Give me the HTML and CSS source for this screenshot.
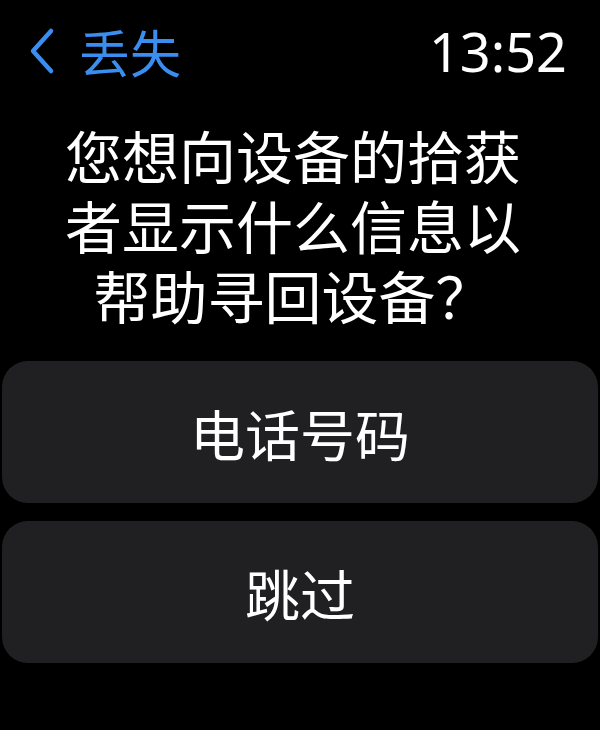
FILE: index.html
```html
<html>
<head>
    <title>丢失</title>
    <meta http-equiv="Content-Type" content="text/html; charset=UTF-8"/>
    <meta name="viewport" content="width=device-width, initial-scale=1.0">
    <link rel="stylesheet" href="styles.css">
</head>
<body>
<div class="header">
    <div class="back">
        <svg class="chevron" width="26" height="48" viewBox="0 0 26 48">
            <polyline points="22,4 4,24 22,44" fill="none" stroke="#3a8ef0" stroke-width="4.5"
                      stroke-linecap="round" stroke-linejoin="round"/>
        </svg>
        <span class="back-title">丢失</span>
    </div>
    <div class="time">13:52</div>
</div>
<div class="question">您想向设备的拾获<br>者显示什么信息以<br>帮助寻回设备？</div>
<div class="actions">
    <div class="btn">电话号码</div>
    <div class="btn">跳过</div>
</div>
</body>
</html>
```

FILE: styles.css
```css
html, body {
    margin: 0px;
    background: #000;
    color: #fff;
    font-family: "Noto Sans CJK SC", "Noto Sans", sans-serif;
}

* {
    box-sizing: border-box;
}

body {
    width: 600px;
    height: 730px;
    overflow: hidden;
}

.header {
    display: flex;
    justify-content: space-between;
    align-items: center;
    height: 110px;
    padding: 0 33px 8px 29px;
}

.back {
    display: flex;
    align-items: center;
    color: #3a8ef0;
}

.chevron {
    margin-right: 24px;
}

.back-title {
    font-size: 51px;
    line-height: 1;
}

.time {
    font-family: "Noto Sans", sans-serif;
    font-size: 54px;
    line-height: 1;
}

.question {
    margin-top: 9px;
    padding-right: 14px;
    text-align: center;
    font-size: 57px;
    line-height: 70px;
}

.actions {
    display: flex;
    flex-direction: column;
    gap: 18px;
    margin-top: 32px;
    padding: 0 2px;
}

.btn {
    height: 142px;
    border-radius: 26px;
    background: #202022;
    display: flex;
    align-items: center;
    justify-content: center;
    font-size: 55px;
}
```
